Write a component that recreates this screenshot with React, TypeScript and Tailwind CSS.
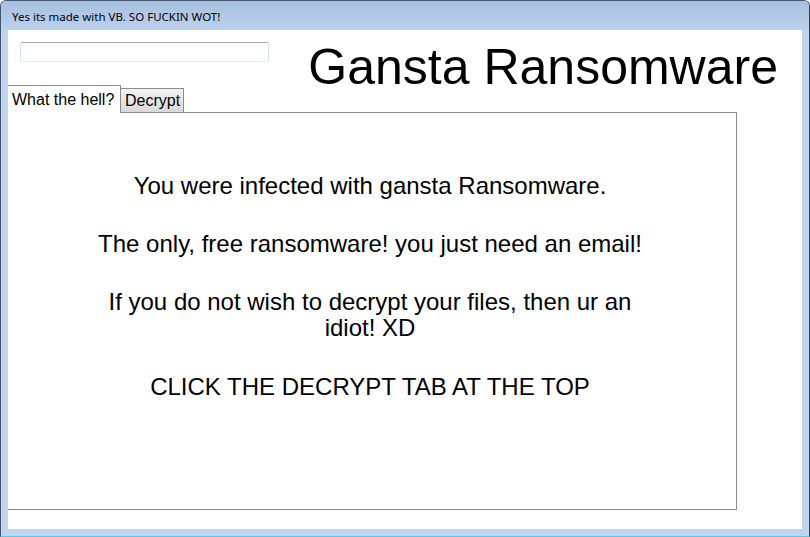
import React from "react";

export default function App() {
  return (
    <div className="w-[810px] h-[537px] flex flex-col bg-[#c1d5ee] border-t border-l border-r border-b border-t-[#46566b] border-l-[#46566b] border-r-[#33475c] border-b-[#5fc8e3] rounded-tl-[6px] rounded-tr-[6px] overflow-hidden">
      <div className="h-[29px] shrink-0 bg-gradient-to-b from-[#a7c0e1] to-[#bcd1ec] flex items-start">
        <span
          className="ml-[11px] mt-[9px] text-[11.5px] leading-[14px] text-black whitespace-nowrap"
          style={{ fontFamily: '"Noto Sans", "Open Sans", sans-serif' }}
        >
          Yes its made with VB. SO FUCKIN WOT!
        </span>
      </div>
      <div className="flex-1 flex pl-[7px] pr-[6px] pb-[6px]">
        <div
          className="w-[794px] h-[499px] bg-white flex flex-col"
          style={{ fontFamily: '"Liberation Sans", Arial, sans-serif' }}
        >
          <div className="h-[55px] shrink-0 flex items-start">
            <div className="ml-[12px] mt-[12px] w-[249px] h-[20px] rounded-[2px] border border-t-[#abadb3] border-l-[#dbdfe6] border-r-[#dbdfe6] border-b-[#e3e9ef] bg-white" />
            <div className="ml-auto mr-[24px] mt-[17px] h-[38px] text-[50px] leading-[40px] text-black whitespace-nowrap">
              Gansta Ransomware
            </div>
          </div>
          <div className="relative z-10 flex items-end h-[28px] shrink-0">
            <div className="w-[113px] h-[28px] bg-white border-t border-r border-[#898c95] pl-[4px] pt-[5px] text-[16px] leading-[18px] text-black whitespace-nowrap">
              What the hell?
            </div>
            <div className="w-[63px] h-[25px] bg-gradient-to-b from-[#f3f3f3] to-[#d9d9d9] border-t border-r border-b border-[#898c95] pl-[4px] pt-[3px] text-[16px] leading-[18px] text-black">
              Decrypt
            </div>
          </div>
          <div className="-mt-px w-[729px] h-[398px] border-t border-r border-b border-[#8c8c8c] flex flex-col items-center pt-[60px] pr-[4px] text-[24px] leading-[26px] text-black text-center">
            <p>You were infected with gansta Ransomware.</p>
            <p className="mt-[32px]">The only, free ransomware! you just need an email!</p>
            <p className="mt-[32px]">
              If you do not wish to decrypt your files, then ur an
              <br />
              idiot! XD
            </p>
            <p className="mt-[33px]">CLICK THE DECRYPT TAB AT THE TOP</p>
          </div>
        </div>
      </div>
    </div>
  );
}
